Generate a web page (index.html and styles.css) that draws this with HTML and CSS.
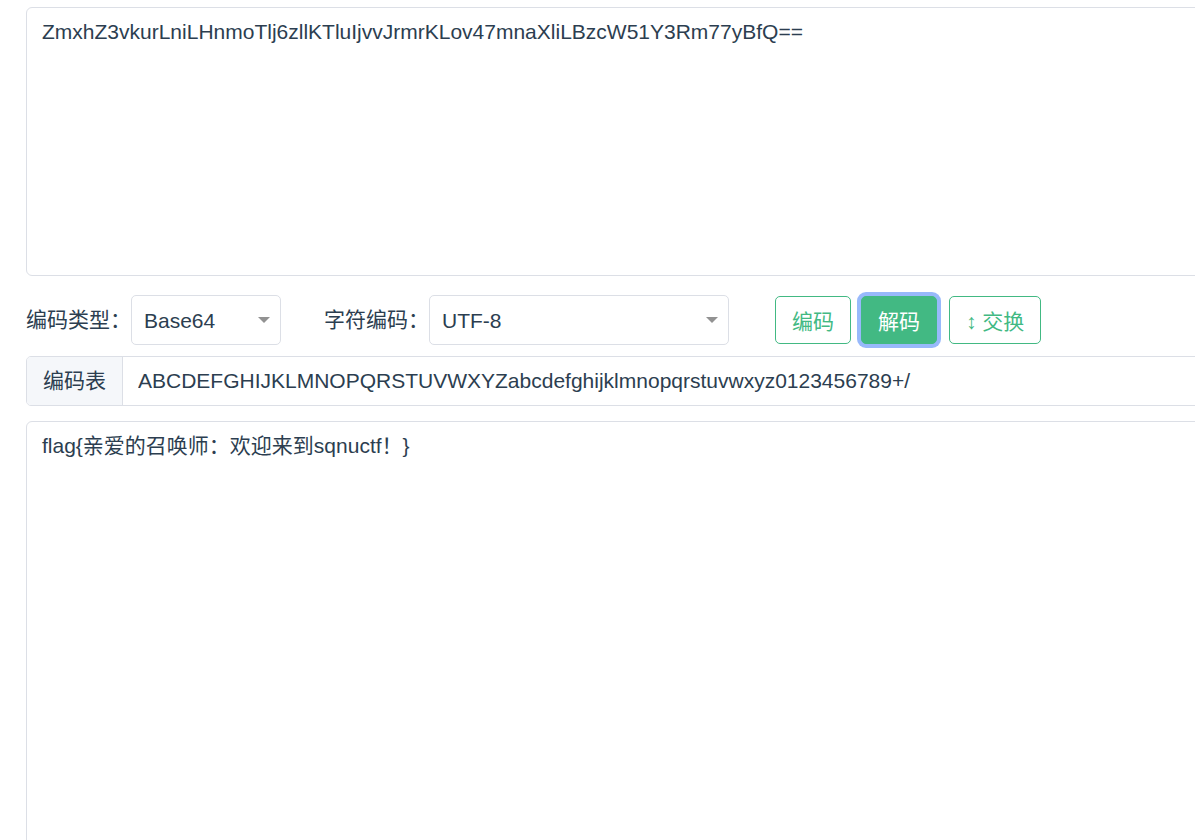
FILE: index.html
```html
<!DOCTYPE html>
<html lang="zh-CN">
<head>
    <meta charset="UTF-8">
    <meta name="viewport" content="width=device-width, initial-scale=1.0">
    <title>Base64 编码解码</title>
    <link rel="stylesheet" href="styles.css">
</head>
<body>
    <div class="container">
        <textarea class="text-box source" id="source" spellcheck="false">ZmxhZ3vkurLniLHnmoTlj6zllKTluIjvvJrmrKLov47mnaXliLBzcW51Y3Rm77yBfQ==</textarea>

        <div class="toolbar">
            <label class="field-label">编码类型：</label>
            <div class="select-wrap type-select">
                <select id="type">
                    <option>Base64</option>
                    <option>Base32</option>
                    <option>Base16</option>
                </select>
            </div>
            <label class="field-label charset-label">字符编码：</label>
            <div class="select-wrap charset-select">
                <select id="charset">
                    <option>UTF-8</option>
                    <option>GBK</option>
                </select>
            </div>
            <div class="buttons">
                <button class="btn">编码</button>
                <button class="btn btn-primary">解码</button>
                <button class="btn btn-swap">↕ 交换</button>
            </div>
        </div>

        <div class="input-group">
            <div class="prepend">编码表</div>
            <input type="text" id="alphabet" value="ABCDEFGHIJKLMNOPQRSTUVWXYZabcdefghijklmnopqrstuvwxyz0123456789+/" spellcheck="false">
        </div>

        <textarea class="text-box result" id="result" spellcheck="false">flag{亲爱的召唤师：欢迎来到sqnuctf！}</textarea>
    </div>
</body>
</html>
```

FILE: styles.css
```css
html, body {
    margin: 0;
    overflow: hidden;
    background: #fff;
}
body {
    font-family: "Liberation Sans", "Noto Sans CJK SC", sans-serif;
    font-size: 21px;
    color: #2c3e50;
}
.container {
    width: 1300px;
    padding: 7px 0 0 26px;
}
.text-box {
    display: block;
    box-sizing: border-box;
    width: 100%;
    padding: 8px 15px;
    border: 1px solid #dcdfe6;
    border-radius: 6px;
    font-family: inherit;
    font-size: 21px;
    line-height: 31px;
    color: #2c3e50;
    resize: none;
    outline: none;
}
.source {
    height: 269px;
}
.result {
    height: 520px;
    margin-top: 15px;
}
.toolbar {
    display: flex;
    align-items: center;
    height: 50px;
    margin-top: 19px;
}
.field-label {
    width: 105px;
    line-height: 50px;
    white-space: nowrap;
}
.charset-label {
    margin-left: 43px;
}
.select-wrap {
    position: relative;
    height: 50px;
}
.select-wrap::after {
    content: "";
    position: absolute;
    right: 11px;
    top: 22px;
    border-left: 6px solid transparent;
    border-right: 6px solid transparent;
    border-top: 6px solid #929292;
    pointer-events: none;
}
.type-select {
    width: 150px;
}
.charset-select {
    width: 300px;
}
select {
    appearance: none;
    -webkit-appearance: none;
    box-sizing: border-box;
    width: 100%;
    height: 50px;
    padding: 0 30px 0 12px;
    border: 1px solid #dcdfe6;
    border-radius: 5px;
    background: #fff;
    font-family: inherit;
    font-size: 21px;
    color: #2c3e50;
    outline: none;
}
.buttons {
    display: flex;
    align-items: center;
    margin-left: 46px;
}
.btn {
    box-sizing: border-box;
    height: 48px;
    padding: 0 16px;
    margin-right: 10px;
    border: 1px solid #42b983;
    border-radius: 5px;
    background: #fff;
    font-family: inherit;
    font-size: 21px;
    color: #42b983;
    cursor: pointer;
}
.btn-primary {
    background: #42b983;
    color: #fff;
    box-shadow: 0 0 0 4px #98b9fb;
    margin-right: 12px;
}
.btn-swap {
    padding: 0 16px;
}
.input-group {
    display: flex;
    box-sizing: border-box;
    height: 50px;
    margin-top: 11px;
    border: 1px solid #dcdfe6;
    border-radius: 5px;
    overflow: hidden;
}
.prepend {
    padding: 0 16px;
    line-height: 48px;
    background: #f5f7fa;
    border-right: 1px solid #dcdfe6;
    white-space: nowrap;
}
.input-group input {
    flex: 1;
    border: none;
    padding: 0 15px;
    font-family: inherit;
    font-size: 21px;
    color: #2c3e50;
    outline: none;
}
```
